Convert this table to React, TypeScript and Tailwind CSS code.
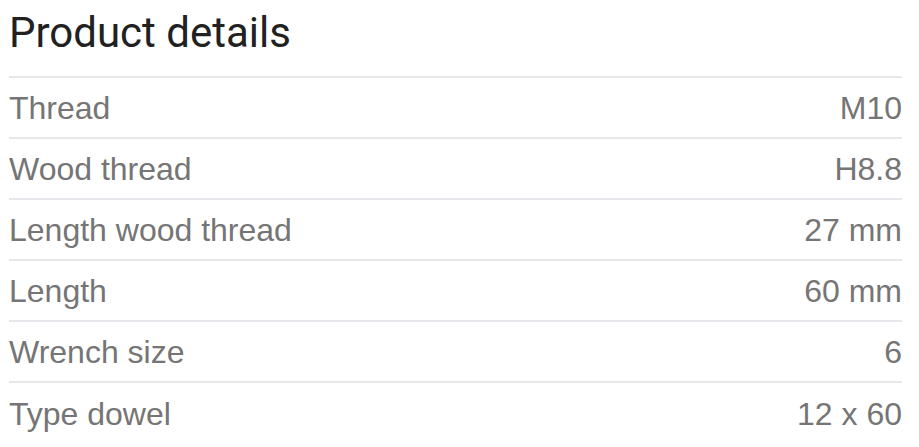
const rows = [
  ['Thread', 'M10'],
  ['Wood thread', 'H8.8'],
  ['Length wood thread', '27 mm'],
  ['Length', '60 mm'],
  ['Wrench size', '6'],
  ['Type dowel', '12 x 60'],
];

export default function App() {
  return (
    <div className="bg-white w-[919px] h-[447px] pl-[9px] pr-[17px] font-['Liberation_Sans',Arial,sans-serif]">
      <h2 className="font-['Roboto',sans-serif] text-[42px] leading-[48px] pt-[9px] pb-[19px] text-[#212121]">
        Product details
      </h2>
      <div className="border-t-2 border-[#e5e7eb]">
        {rows.map(([label, value]) => (
          <div
            key={label}
            className="flex justify-between items-center h-[61px] border-b-2 border-[#e5e7eb] last:border-b-0 text-[32px] text-[#757575]"
          >
            <span>{label}</span>
            <span>{value}</span>
          </div>
        ))}
      </div>
    </div>
  );
}
